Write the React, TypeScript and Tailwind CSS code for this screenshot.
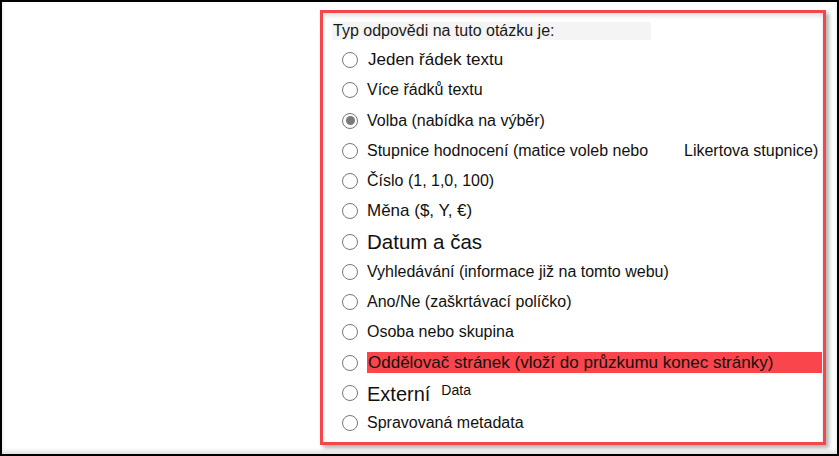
import React from "react";

function Radio({ checked = false }: { checked?: boolean }) {
  return (
    <span className="w-[16px] h-[16px] rounded-full border-[1.5px] border-[#777777] bg-white flex items-center justify-center shrink-0">
      {checked && <span className="w-[9px] h-[9px] rounded-full bg-[#7a7a7a]" />}
    </span>
  );
}

function Row({ children, checked = false, top = false }: { children: React.ReactNode; checked?: boolean; top?: boolean }) {
  return (
    <div className="h-[30.25px] flex items-center pl-[19px]">
      <Radio checked={checked} />
      <div className={top ? "ml-[9px] flex items-start flex-1 min-w-0" : "ml-[9px] flex items-center flex-1 min-w-0"}>{children}</div>
    </div>
  );
}

export default function App() {
  return (
    <div className="w-[839px] h-[456px] bg-white border-2 border-black box-border shadow-[inset_0_-3px_4px_rgba(0,0,0,0.12)] font-['Liberation_Sans',Arial,sans-serif] text-[#111] overflow-hidden">
      <div className="ml-[318px] mt-[8px] w-[506px] h-[435px] box-border border-[3px] border-[#f4474c] shadow-[3px_3px_4px_rgba(0,0,0,0.3),inset_0_3px_4px_rgba(0,0,0,0.12)] flex flex-col">
        <div className="mt-[9px] ml-[9px] w-[319px] h-[18px] bg-[#f4f4f4] pl-[1px] text-[16px] leading-[18px] text-[#1a1a1a]">
          Typ odpovědi na tuto otázku je:
        </div>
        <div className="mt-[5px] flex flex-col text-[16px] leading-[20px]">
          <Row>
            <span className="pl-[1px] text-[17px]">Jeden řádek textu</span>
          </Row>
          <Row>
            <span>Více řádků textu</span>
          </Row>
          <Row checked>
            <span>Volba (nabídka na výběr)</span>
          </Row>
          <Row>
            <span className="inline-block w-[317px] whitespace-nowrap">Stupnice hodnocení (matice voleb nebo</span>
            <span className="whitespace-nowrap">Likertova stupnice)</span>
          </Row>
          <Row>
            <span>Číslo (1, 1,0, 100)</span>
          </Row>
          <Row>
            <span className="text-[17px]">Měna ($, Y, €)</span>
          </Row>
          <Row>
            <span className="text-[20.5px] leading-[22px]">Datum a čas</span>
          </Row>
          <Row>
            <span>Vyhledávání (informace již na tomto webu)</span>
          </Row>
          <Row>
            <span>Ano/Ne (zaškrtávací políčko)</span>
          </Row>
          <Row>
            <span>Osoba nebo skupina</span>
          </Row>
          <Row>
            <div className="flex-1 h-[21px] bg-[#f9454b] flex items-center whitespace-nowrap mr-[1px] pl-[1px] text-[17px]">
              Oddělovač stránek (vloží do průzkumu konec stránky)
            </div>
          </Row>
          <Row top>
            <span className="text-[20px] leading-[22px] mt-[3px]">Externí</span>
            <span className="ml-[11px] text-[14px] leading-[16px] mt-[2px]">Data</span>
          </Row>
          <Row>
            <span>Spravovaná metadata</span>
          </Row>
        </div>
      </div>
    </div>
  );
}
